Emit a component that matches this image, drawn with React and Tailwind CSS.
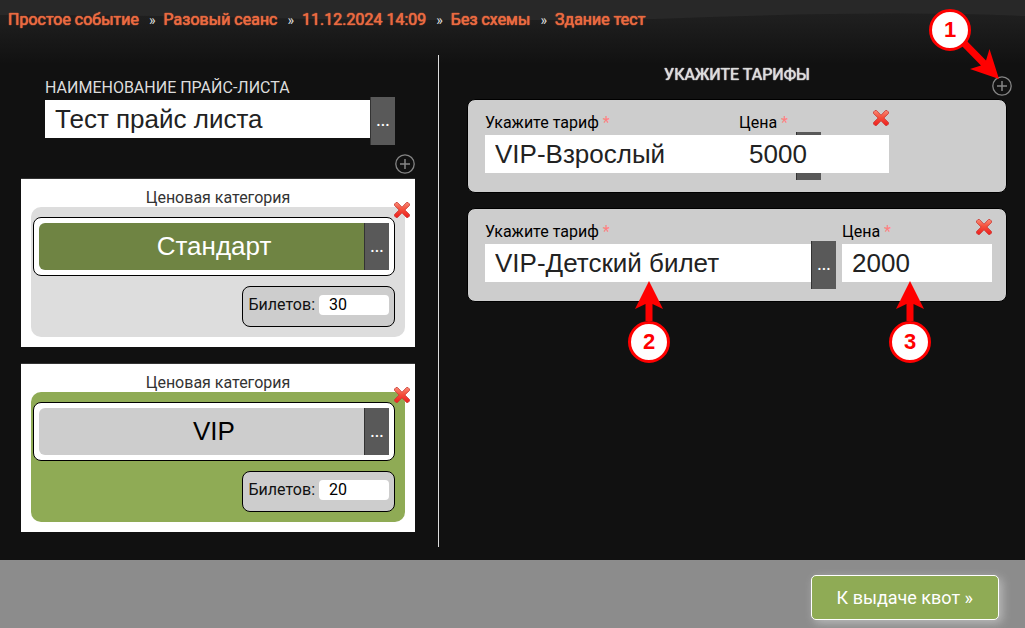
import { useState } from "react"

const crumbs = ["Простое событие", "Разовый сеанс", "11.12.2024 14:09", "Без схемы", "Здание тест"]

const initialCategories = [
  { id: 1, name: "Стандарт", tickets: "30", box: "bg-[#dddddd]", field: "bg-[#6f8443] text-white" },
  { id: 2, name: "VIP", tickets: "20", box: "bg-[#8fab55]", field: "bg-[#cdcdcd] text-black" },
]

const initialTariffs = [
  { id: 1, name: "VIP-Взрослый", price: "5000", narrow: true },
  { id: 2, name: "VIP-Детский билет", price: "2000", marks: true },
]

const CrossIcon = () => (
  <svg viewBox="0 0 16 16" className="block h-4 w-4" aria-hidden="true">
    <defs>
      <linearGradient id="cross" x1="0" y1="0" x2="0" y2="1">
        <stop offset="0" stopColor="#f98a75" />
        <stop offset="0.45" stopColor="#f5503c" />
        <stop offset="1" stopColor="#ee1f1f" />
      </linearGradient>
    </defs>
    <path
      d="M2 .5H3.500L8 5.200 12.500 .5H14L15.500 2V3.500L10.900 8 15.500 12.500V14L14 15.500H12.500L8 10.800 3.500 15.500H2L.5 14V12.500L5.100 8 .5 3.500V2Z"
      fill="url(#cross)"
      stroke="#c93a35"
      strokeWidth="0.8"
      strokeLinejoin="round"
    />
  </svg>
)

const PlusIcon = () => (
  <svg viewBox="0 0 20 20" className="block h-5 w-5" fill="none" stroke="#858585" aria-hidden="true">
    <circle cx="10" cy="10" r="9.200" strokeWidth="1.300" />
    <path d="M10 5v10M5 10h10" strokeWidth="1.500" />
  </svg>
)

const DotsButton = ({ className = "" }) => (
  <button
    type="button"
    aria-label="Выбрать"
    className={`w-[25px] shrink-0 border-l border-[#333] bg-[#595959] text-center text-base font-medium text-white ${className}`}
  >
    ...
  </button>
)

const TextField = ({ id, value, onChange }) => (
  <input
    id={id}
    value={value}
    onChange={(e) => onChange(e.target.value)}
    className="mb-1 h-[38px] w-full min-w-0 bg-white px-[10px] font-['Liberation_Sans'] text-[26px] text-[#222] outline-none"
  />
)

const MarkCircle = ({ number }) => (
  <span className="flex h-[42px] w-[42px] shrink-0 items-center justify-center rounded-full border-3 border-[#f00] bg-white pb-px font-['Liberation_Sans'] text-[22px] leading-none font-bold text-[#f00]">
    {number}
  </span>
)

// Numbered callout with an arrow that points up
const Mark = ({ number, className }) => (
  <div className={`pointer-events-none absolute z-20 flex w-[42px] flex-col items-center ${className}`}>
    <svg viewBox="0 0 28 40" className="h-10 w-7" fill="#f00" aria-hidden="true">
      <path d="M14 0 28 28 17.500 23V40H10.500V23L0 28Z" />
    </svg>
    <MarkCircle number={number} />
  </div>
)

const CategoryCard = ({ category, onChange }) => (
  <section className="relative border-t border-[#333] bg-white px-[10px] pt-[9px] pb-[10px]">
    <label htmlFor={`category-${category.id}`} className="block text-center leading-[19px] text-[#333]">
      Ценовая категория
    </label>
    <button type="button" aria-label="Удалить категорию" className="absolute top-[23px] right-[5px] z-10">
      <CrossIcon />
    </button>
    <div className={`flex flex-col items-end gap-[10px] rounded-[10px] py-[10px] pr-[10px] pl-[2px] ${category.box}`}>
      <div className="flex h-[59px] w-full rounded-lg border border-black bg-white p-[5px]">
        <input
          id={`category-${category.id}`}
          value={category.name}
          onChange={(e) => onChange({ ...category, name: e.target.value })}
          className={`w-full min-w-0 rounded-l-md pr-[5px] pl-[30px] text-center font-['Liberation_Sans'] text-[26px] outline-none ${category.field}`}
        />
        <DotsButton />
      </div>
      <div className="flex h-[41px] items-start gap-1 rounded-lg border border-black bg-[#cdcdcd] pt-2 pr-[5px] pl-[6px]">
        <label htmlFor={`tickets-${category.id}`} className="leading-5 text-[#111]">
          Билетов:
        </label>
        <input
          id={`tickets-${category.id}`}
          value={category.tickets}
          onChange={(e) => onChange({ ...category, tickets: e.target.value })}
          className="h-5 w-[70px] rounded-sm bg-white px-[10px] text-base text-black outline-none"
        />
      </div>
    </div>
  </section>
)

const TariffCard = ({ tariff, onChange }) => (
  <section className="flex gap-[6px] rounded-lg border border-black bg-[#cdcdcd] pt-[10px] pr-[14px] pb-3 pl-[17px]">
    <div className={tariff.narrow ? "w-[248px] shrink-0" : "relative min-w-0 flex-1"}>
      <label htmlFor={`tariff-${tariff.id}`} className="block h-[22px] pt-1 leading-[18px] text-black">
        Укажите тариф <span className="text-[#ff8080]">*</span>
      </label>
      <div className={`flex items-center ${tariff.narrow ? "w-[336px]" : ""}`}>
        <TextField
          id={`tariff-${tariff.id}`}
          value={tariff.name}
          onChange={(name) => onChange({ ...tariff, name })}
        />
        <DotsButton className="h-12" />
      </div>
      {tariff.marks && <Mark number="2" className="top-[62px] left-[143px]" />}
    </div>
    <div className="relative z-10 w-[150px] shrink-0">
      <div className="flex h-[22px] items-start justify-between">
        <label htmlFor={`price-${tariff.id}`} className="pt-1 leading-[18px] text-black">
          Цена <span className="text-[#ff8080]">*</span>
        </label>
        <button type="button" aria-label="Удалить тариф">
          <CrossIcon />
        </button>
      </div>
      <div className="flex h-12 items-center">
        <TextField
          id={`price-${tariff.id}`}
          value={tariff.price}
          onChange={(price) => onChange({ ...tariff, price })}
        />
      </div>
      {tariff.marks && <Mark number="3" className="top-[62px] left-[47px]" />}
    </div>
  </section>
)

const App = () => {
  const [title, setTitle] = useState("Тест прайс листа")
  const [categories, setCategories] = useState(initialCategories)
  const [tariffs, setTariffs] = useState(initialTariffs)

  const updateCategory = (next) => setCategories(categories.map((c) => (c.id === next.id ? next : c)))
  const updateTariff = (next) => setTariffs(tariffs.map((t) => (t.id === next.id ? next : t)))

  return (
    <div className="flex min-h-screen flex-col bg-[#111] bg-[linear-gradient(#222,#1e1e1e_20px,#111_64px)] font-[Roboto,sans-serif] text-base text-[#ddd]">
      <nav className="relative flex h-[55px] items-start px-2 pt-[10px] leading-5">
        {/* gloss along the top edge */}
        <svg
          viewBox="0 0 1000 20"
          preserveAspectRatio="none"
          className="absolute top-0 left-0 h-5 w-full"
          fill="#282828"
          aria-hidden="true"
        >
          <path d="M0 0H1000V16Q860 10 640 19Q500 22 300 19Q140 15 0 15Z" />
        </svg>
        {crumbs.map((crumb, i) => (
          <span key={crumb} className="relative flex">
            {i > 0 && <span className="pr-2 pl-[10px] text-sm leading-5">»</span>}
            <a href="#" className="text-[#ea6a40] [text-shadow:0_0_1px_#ea6a40,0_0_1px_#ea6a40]">
              {crumb}
            </a>
          </span>
        ))}
      </nav>

      <main className="flex flex-1 items-start pb-3">
        <div className="flex w-[439px] shrink-0 flex-col border-r border-[#ddd] pt-[23px] pr-[23px] pb-[15px] pl-[21px]">
          <label htmlFor="title" className="h-[19px] pl-6 leading-5 uppercase">
            Наименование прайс-листа
          </label>
          <div className="flex items-center pr-5 pl-6">
            <TextField id="title" value={title} onChange={setTitle} />
            <DotsButton className="h-12" />
          </div>
          <button type="button" aria-label="Добавить категорию" className="mt-[9px] mb-1 self-end">
            <PlusIcon />
          </button>
          <div className="flex flex-col gap-4">
            {categories.map((category) => (
              <CategoryCard key={category.id} category={category} onChange={updateCategory} />
            ))}
          </div>
        </div>

        <div className="min-w-0 flex-1 pr-[18px] pl-[28px]">
          <div className="relative h-11 pt-[10px]">
            <h2 className="text-center leading-5 uppercase [text-shadow:0_0_1px_#ddd,0_0_1px_#ddd]">Укажите тарифы</h2>
            <button type="button" aria-label="Добавить тариф" className="absolute right-[-5px] bottom-[3px]">
              <PlusIcon />
            </button>
            <div className="pointer-events-none absolute right-9 bottom-[48px] z-20">
              <svg viewBox="0 0 50 50" className="absolute top-5 left-5 h-[50px] w-[50px]" fill="#f00" aria-hidden="true">
                <path d="M50 50 21 40 32 36.500 8 12 13 7 37 31.500 40.500 20Z" />
              </svg>
              <div className="relative">
                <MarkCircle number="1" />
              </div>
            </div>
          </div>
          <div className="flex flex-col gap-[15px]">
            {tariffs.map((tariff) => (
              <TariffCard key={tariff.id} tariff={tariff} onChange={updateTariff} />
            ))}
          </div>
        </div>
      </main>

      <footer className="flex h-[68px] items-start justify-end bg-[#8c8c8c] pt-[15px] pr-[26px]">
        <button
          type="button"
          className="h-[45px] rounded-[5px] border border-white bg-[#8fab55] px-[25px] text-lg text-white shadow-[3px_3px_10px_#bbb]"
        >
          К выдаче квот »
        </button>
      </footer>
    </div>
  )
}

export default App
